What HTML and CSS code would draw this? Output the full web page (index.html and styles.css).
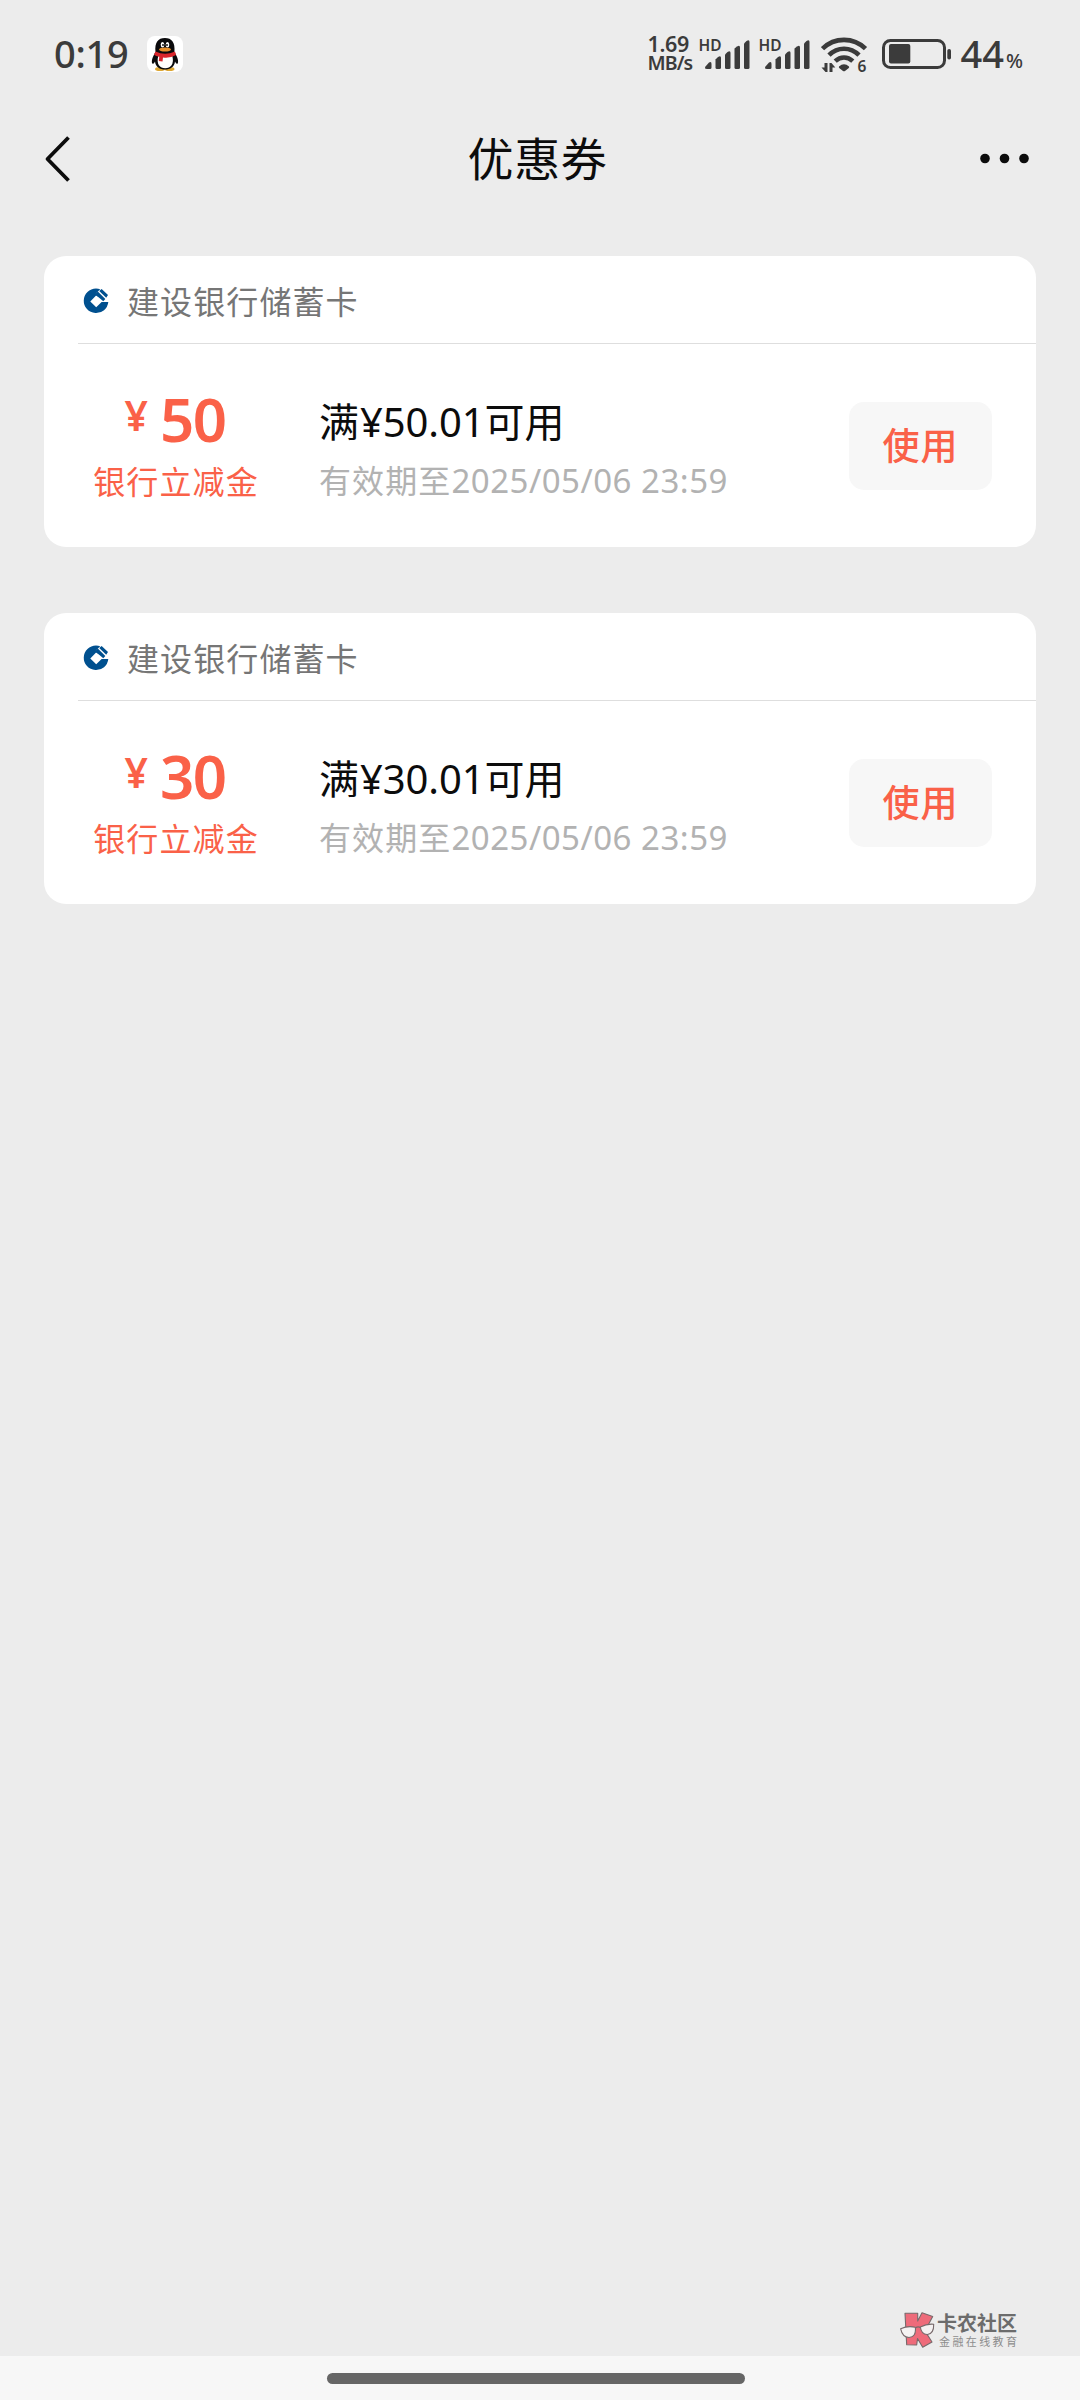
FILE: index.html
```html
<!DOCTYPE html>
<html lang="zh-CN">
<head>
<meta charset="utf-8">
<title>优惠券</title>
<link rel="stylesheet" href="styles.css">
</head>
<body>
<svg class="defs" width="0" height="0" aria-hidden="true">
  <symbol id="signal" viewBox="0 0 52 50">
    <g fill="#3b3b3b">
      <path d="M6.500 36.500L10 32.500Q12.500 31 12.500 34V37.500Q12.500 39 11 39H8Q5 39 6.500 36.500Z"/>
      <path d="M16.500 29.500L19 27Q22 25 22 28V37.500Q22 39 20.500 39H18Q16.500 39 16.500 37.500Z"/>
      <path d="M26 24.500L28.500 22Q31.500 20 31.500 23V37.500Q31.500 39 30 39H27.500Q26 39 26 37.500Z"/>
      <path d="M35.500 18.500L38 16.500Q41 14.500 41 17.500V37.500Q41 39 39.500 39H37Q35.500 39 35.500 37.500Z"/>
      <path d="M45 13.500L47.500 11Q50.500 9 50.500 12V37.500Q50.500 39 49 39H46.500Q45 39 45 37.500Z"/>
    </g>
  </symbol>
  <symbol id="ccb" viewBox="0 0 26 26">
    <path fill="#00508f" fill-rule="evenodd" d="M13 .5C14.500 .5 16 .8 17.200 1.300L12.800 5.700 17.600 10.300 13.100 7.600 7.300 13.500 13.200 19.300 18.600 14H25.300A12.300 12.300 0 1 1 13 .5Z"/>
    <path fill="#00508f" d="M12 6.300L14.800 3.500 22.300 11 20.300 13.200Z"/>
    <path fill="#00508f" d="M16.200 3L18.600 1 25 7.100 23.200 9.700Z"/>
  </symbol>
</svg>

<header class="status">
  <div class="status-left">
    <span class="clock">0:19</span>
    <svg class="qq" viewBox="0 0 36 36" width="36" height="36">
      <rect width="36" height="36" rx="8" fill="#fff"/>
      <ellipse cx="13" cy="33" rx="5" ry="2" fill="#dda632"/><ellipse cx="22.500" cy="33" rx="5" ry="2" fill="#dda632"/>
      <path fill="#0a0a0c" d="M8.500 16C7.500 6.500 11 2 17.900 2S28.400 6.500 27.400 16C30 20 32 25 30.700 27.500 29.500 28.500 28.700 27 28 25.500 27.500 31 23 33.500 18 33.500S8.500 31 8 25.500C7.300 27 6.500 28.500 5.300 27.500 4 25 6 20 8.500 16Z"/>
      <path fill="#fff" d="M11.300 20H25.300C27.500 28 23.500 32.300 18.200 32.300S9 28 11.300 20Z"/>
      <ellipse cx="15.500" cy="8.700" rx="1.800" ry="2.700" fill="#fff"/><ellipse cx="20.500" cy="8.700" rx="1.800" ry="2.700" fill="#fff"/>
      <circle cx="16" cy="9" r=".9"/><circle cx="20" cy="9" r=".9"/>
      <ellipse cx="18" cy="13.500" rx="6" ry="2.100" fill="#e7902c"/>
      <path fill="#d9252c" d="M8.500 15.500Q18 20 28 15.500L29 19Q23 22.500 16 21.500L15.500 25.500 11.800 25 12.300 20.800Q9 20 7 18.700Z"/>
    </svg>
  </div>
  <div class="status-right">
    <div class="speed"><span class="rate">1.69</span><span class="unit">MB/s</span></div>
    <div class="cell"><svg width="52" height="50"><use href="#signal"/></svg><span class="hd">HD</span></div>
    <div class="cell"><svg width="52" height="50"><use href="#signal"/></svg><span class="hd">HD</span></div>
    <svg class="wifi" viewBox="0 0 48 50" width="48" height="50">
      <g fill="none" stroke="#3b3b3b" stroke-width="4.600">
        <path d="M1.500 18.700C13.500 6.900 32.500 6.900 44.500 18.700"/>
        <path d="M8 25.200C16.500 16.600 29.500 16.600 38 25.200"/>
        <path d="M14.200 31.200C19.500 26.200 26.500 26.200 31.800 31.200"/>
      </g>
      <path fill="#3b3b3b" d="M18 36.500Q23 32 28 36.500Q28.500 37.500 27.500 38.200L24 41Q23 41.700 22 41L18.500 38.200Q17.500 37.500 18 36.500Z"/>
      <path fill="#3b3b3b" d="M6.500 33V42H4.500L.5 37.500H3.500V33ZM8.500 42V33H10.500L14.300 37.500H11.500V42Z"/>
      <text x="36.500" y="42" class="wifi-gen">6</text>
    </svg>
    <svg class="battery" viewBox="0 0 72 50" width="72" height="50">
      <rect x="2.500" y="10.500" width="61" height="27" rx="7" fill="none" stroke="#3b3b3b" stroke-width="3"/>
      <rect x="8" y="14" width="21.300" height="19.500" rx="2" fill="#3b3b3b"/>
      <rect x="66.300" y="19" width="3.700" height="10.500" rx="1.800" fill="#3b3b3b"/>
    </svg>
    <div class="percent"><span>44</span><small>%</small></div>
  </div>
</header>

<nav class="nav">
  <svg class="back" viewBox="0 0 28 50" width="28" height="50"><path d="M26.500 3.500L5.500 25 26.500 46.500" fill="none" stroke="#0c0c0c" stroke-width="3.800" stroke-linejoin="round"/></svg>
  <h1 class="title">优惠券</h1>
  <svg class="more" viewBox="0 0 52 50" width="52" height="50" fill="#0c0c0c"><circle cx="7" cy="24.500" r="4.800"/><circle cx="26.500" cy="24.500" r="4.800"/><circle cx="46" cy="24.500" r="4.800"/></svg>
</nav>

<main class="list">
  <section class="card">
    <div class="bank"><svg class="logo" width="26" height="26"><use href="#ccb"/></svg><span>建设银行储蓄卡</span></div>
    <div class="body">
      <div class="value">
        <div class="amount"><span class="yen">¥</span><span class="num">50</span></div>
        <div class="kind">银行立减金</div>
      </div>
      <div class="info">
        <div class="rule">满<span class="digits">¥50.01</span>可用</div>
        <div class="expiry">有效期至<span class="date">2025/05/06 23:59</span></div>
      </div>
      <button class="use">使用</button>
    </div>
  </section>
  <section class="card">
    <div class="bank"><svg class="logo" width="26" height="26"><use href="#ccb"/></svg><span>建设银行储蓄卡</span></div>
    <div class="body">
      <div class="value">
        <div class="amount"><span class="yen">¥</span><span class="num">30</span></div>
        <div class="kind">银行立减金</div>
      </div>
      <div class="info">
        <div class="rule">满<span class="digits">¥30.01</span>可用</div>
        <div class="expiry">有效期至<span class="date">2025/05/06 23:59</span></div>
      </div>
      <button class="use">使用</button>
    </div>
  </section>
</main>

<footer class="gesture"><div class="pill"></div></footer>

<aside class="watermark">
  <svg viewBox="0 0 36 36" width="36" height="36" stroke="#77696b" stroke-width="1.100" stroke-linejoin="round">
    <path fill="#ee6b7a" d="M5 1.200H17.700V9L22 .8 32.700 4.500 25 19 32 30 22.700 35.200 17.500 26.500 16.700 33 6.700 32.700Z"/>
    <path fill="#f5f2f2" d="M.6 16.700Q8 13.500 15.300 15.300Q16.500 25 9 25.500Q2.500 25.500 .6 16.700Z"/>
    <path fill="#f5f2f2" d="M20.300 15Q27 11.500 33.700 12.200Q34 21.500 27.500 22.500Q21.500 22.800 20.300 15Z"/>
    <path fill="none" d="M15.300 16Q18 14 20.300 15.500"/>
  </svg>
  <div class="brand"><b>卡农社区</b><span>金融在线教育</span></div>
</aside>
</body>
</html>
```
FILE: styles.css
```css
* { box-sizing: border-box; }
body {
  margin: 0;
  position: relative;
  display: flex;
  flex-direction: column;
  width: 1080px;
  height: 2400px;
  overflow: hidden;
  background: #ececec;
  color: #0c0c0c;
  font-family: "Noto Sans", "Noto Sans CJK SC", sans-serif;
}
svg { display: block; flex: none; }
.defs { position: absolute; }

.status {
  display: flex;
  justify-content: space-between;
  height: 110px;
  padding: 30px 57px 0 54px;
  color: #3b3b3b;
}
.status-left, .status-right { display: flex; align-items: flex-start; }
.clock { width: 93px; font-size: 38px; font-weight: 500; line-height: 46px; letter-spacing: -.3px; }
.qq { margin-top: 6px; }
.speed { display: flex; flex-direction: column; width: 52px; padding-top: 4px; font-weight: 600; white-space: nowrap; }
.rate { font-size: 21.500px; line-height: 19px; letter-spacing: -.3px; }
.unit { font-size: 19.500px; line-height: 19px; letter-spacing: -.9px; }
.cell { position: relative; width: 60px; }
.hd { position: absolute; left: -1px; top: 5px; font-size: 15.500px; font-weight: 600; line-height: 20px; }
.wifi { margin-left: 2px; }
.wifi-gen { font-size: 15.500px; font-weight: 600; fill: #3b3b3b; }
.battery { margin-left: 12px; }
.percent { display: flex; align-items: baseline; margin-left: 7px; font-size: 38px; font-weight: 500; line-height: 46px; }
.percent small { margin-left: 2px; font-size: 20px; }

.nav {
  display: flex;
  justify-content: space-between;
  align-items: center;
  height: 97px;
  padding: 0 50px 0 42px;
}
.title { margin: 0 0 1px 27px; font-size: 46px; font-weight: 400; line-height: 60px; letter-spacing: .7px; }

.list { display: flex; flex-direction: column; gap: 66px; flex: 1; padding: 49px 44px 0; }
.card { height: 291px; border-radius: 22px; background: #fff; }
.bank {
  display: flex;
  align-items: center;
  gap: 17px;
  height: 88px;
  margin-left: 34px;
  padding: 0 0 0 5px;
  border-bottom: 1.500px solid #dedede;
  color: #767676;
  font-size: 32px;
  line-height: 44px;
  letter-spacing: 1.100px;
}
.logo { margin-top: 2px; margin-right: 1px; }
.bank span { margin-top: 4px; }

.body { display: flex; height: 203px; padding-right: 44px; }
.value { width: 264px; flex: none; padding-top: 39px; color: #fa6148; text-align: center; }
.amount { display: flex; justify-content: center; align-items: flex-start; height: 79px; padding-right: 2px; gap: 12px; font-weight: 600; }
.yen { font-size: 41px; line-height: 64px; }
.num { font-size: 60px; line-height: 73px; letter-spacing: -1.500px; }
.kind { font-size: 32px; line-height: 40px; letter-spacing: 1.100px; }
.info { flex: 1; padding: 50px 0 0 11px; }
.rule { font-size: 40px; line-height: 56px; }
.digits { margin-left: 1px; letter-spacing: -.1px; }
.expiry { padding-top: 3px; font-size: 32px; line-height: 56px; letter-spacing: 1.100px; color: #b2b2b2; }
.date { font-size: 33px; letter-spacing: .5px; }
.use {
  flex: none;
  width: 143px;
  height: 88px;
  margin: 58px 0 0;
  padding: 0;
  border: 0;
  border-radius: 15px;
  background: #f7f7f7;
  color: #fa6148;
  font: 500 37px/60px "Noto Sans", "Noto Sans CJK SC", sans-serif;
  letter-spacing: 1px;
}

.gesture { display: flex; justify-content: center; height: 44px; padding: 17px 8px 0 0; background: #f7f7f7; }
.pill { width: 418px; height: 11px; border-radius: 6px; background: #666; }

.watermark { position: absolute; left: 900px; top: 2312px; display: flex; gap: 1px; }
.brand { display: flex; flex-direction: column; color: #6c6c6c; white-space: nowrap; }
.brand b { padding-top: 1px; font-size: 20px; line-height: 22px; font-weight: 700; }
.brand span { padding-left: 2px; font-size: 11px; line-height: 14px; letter-spacing: 2.400px; color: #8c8c8c; }
```
